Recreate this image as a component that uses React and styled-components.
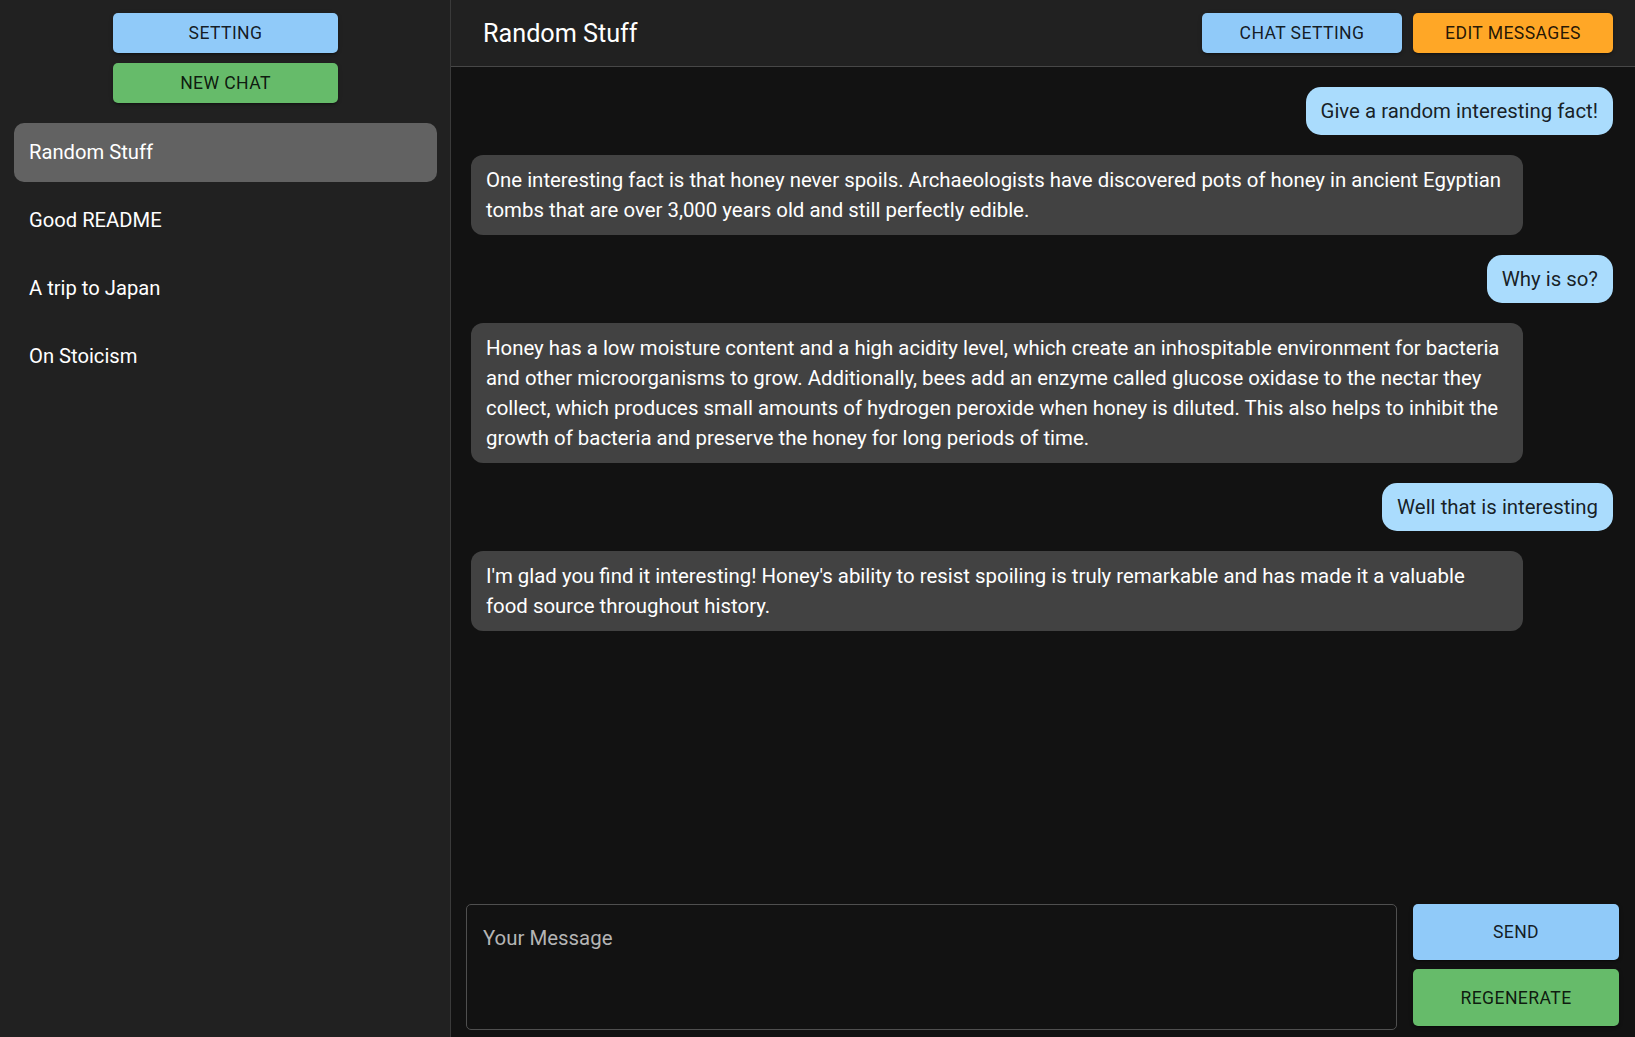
import React from 'react';
import styled, { createGlobalStyle } from 'styled-components';

const GlobalStyle = createGlobalStyle`
  html, body {
    margin: 0;
    padding: 0;
    height: 100%;
    background: #121212;
  }
  #root {
    height: 100%;
  }
  * {
    box-sizing: border-box;
  }
`;

const Layout = styled.div`
  display: flex;
  height: 100vh;
  font-family: Roboto, "Liberation Sans", sans-serif;
  color: #fff;
`;

const Sidebar = styled.aside`
  width: 451px;
  flex-shrink: 0;
  background: #212121;
  border-right: 1px solid #3a3a3a;
  display: flex;
  flex-direction: column;
  padding: 13px 13px 0 14px;
`;

const SideButtons = styled.div`
  display: flex;
  flex-direction: column;
  align-items: center;
  gap: 10px;
  margin-bottom: 20px;
`;

const Button = styled.button`
  width: ${props => props.width || 225}px;
  height: ${props => props.height || 40}px;
  border: 0;
  border-radius: 5px;
  background: ${props => props.color};
  color: rgba(0, 0, 0, 0.87);
  font-family: Roboto, "Liberation Sans", sans-serif;
  font-size: 17.6px;
  font-weight: 400;
  letter-spacing: 0.4px;
  text-transform: uppercase;
  cursor: pointer;
  box-shadow: 0 3px 1px -2px rgba(0, 0, 0, 0.2), 0 2px 2px 0 rgba(0, 0, 0, 0.14),
    0 1px 5px 0 rgba(0, 0, 0, 0.12);
`;

const ChatList = styled.ul`
  list-style: none;
  margin: 0;
  padding: 0;
  display: flex;
  flex-direction: column;
  gap: 9px;
`;

const ChatItem = styled.li`
  height: 59px;
  display: flex;
  align-items: center;
  padding: 0 15px 2px;
  border-radius: 10px;
  font-size: 20.2px;
  background: ${props => (props.active ? '#626262' : 'transparent')};
  cursor: pointer;
`;

const Main = styled.main`
  flex: 1;
  display: flex;
  flex-direction: column;
  min-width: 0;
  background: #121212;
`;

const Header = styled.header`
  height: 67px;
  flex-shrink: 0;
  background: #212121;
  border-bottom: 1px solid #474747;
  display: flex;
  align-items: center;
  padding: 0 22px 0 32px;
`;

const Title = styled.h1`
  flex: 1;
  margin: 0;
  font-size: 25.2px;
  font-weight: 400;
`;

const HeaderActions = styled.div`
  display: flex;
  gap: 11px;
`;

const Messages = styled.div`
  flex: 1;
  display: flex;
  flex-direction: column;
  gap: 20px;
  padding: 20px 22px 20px 20px;
  overflow-y: auto;
`;

const Bubble = styled.div`
  align-self: ${props => (props.user ? 'flex-end' : 'flex-start')};
  max-width: 1052px;
  width: ${props => (props.user ? 'auto' : '1052px')};
  padding: ${props => (props.user ? '9px 15px' : '10px 18px 10px 15px')};
  border-radius: ${props => (props.user ? '15px' : '12px')};
  background: ${props => (props.user ? '#aadcfd' : '#424242')};
  color: ${props => (props.user ? 'rgba(0, 0, 0, 0.87)' : '#fff')};
  font-size: 20.4px;
  line-height: 30px;
`;

const Composer = styled.div`
  display: flex;
  gap: 16px;
  padding: 0 16px 7px 15px;
`;

const MessageInput = styled.textarea`
  flex: 1;
  height: 126px;
  resize: none;
  background: transparent;
  border: 1px solid #4f4f4f;
  border-radius: 5px;
  padding: 21px 16px;
  color: #fff;
  font-family: Roboto, "Liberation Sans", sans-serif;
  font-size: 20.4px;
  outline: none;

  &::placeholder {
    color: #b5b5b5;
  }
`;

const ComposerActions = styled.div`
  display: flex;
  flex-direction: column;
  gap: 9px;
  padding-bottom: 4px;
`;

const chats = ['Random Stuff', 'Good README', 'A trip to Japan', 'On Stoicism'];

const messages = [
  { user: true, text: 'Give a random interesting fact!' },
  {
    user: false,
    text:
      'One interesting fact is that honey never spoils. Archaeologists have discovered pots of honey in ancient Egyptian tombs that are over 3,000 years old and still perfectly edible.'
  },
  { user: true, text: 'Why is so?' },
  {
    user: false,
    text:
      'Honey has a low moisture content and a high acidity level, which create an inhospitable environment for bacteria and other microorganisms to grow. Additionally, bees add an enzyme called glucose oxidase to the nectar they collect, which produces small amounts of hydrogen peroxide when honey is diluted. This also helps to inhibit the growth of bacteria and preserve the honey for long periods of time.'
  },
  { user: true, text: 'Well that is interesting' },
  {
    user: false,
    text:
      "I'm glad you find it interesting! Honey's ability to resist spoiling is truly remarkable and has made it a valuable food source throughout history."
  }
];

const App = () => {
  return (
    <>
      <GlobalStyle />
      <Layout>
        <Sidebar>
          <SideButtons>
            <Button color="#90caf9">Setting</Button>
            <Button color="#66bb6a">New Chat</Button>
          </SideButtons>
          <ChatList>
            {chats.map((name, index) => (
              <ChatItem key={name} active={index === 0}>
                {name}
              </ChatItem>
            ))}
          </ChatList>
        </Sidebar>
        <Main>
          <Header>
            <Title>Random Stuff</Title>
            <HeaderActions>
              <Button color="#90caf9" width={200}>Chat Setting</Button>
              <Button color="#ffa726" width={200}>Edit Messages</Button>
            </HeaderActions>
          </Header>
          <Messages>
            {messages.map((message, index) => (
              <Bubble key={index} user={message.user}>
                {message.text}
              </Bubble>
            ))}
          </Messages>
          <Composer>
            <MessageInput placeholder="Your Message" />
            <ComposerActions>
              <Button color="#90caf9" width={206} height={56}>Send</Button>
              <Button color="#66bb6a" width={206} height={57}>Regenerate</Button>
            </ComposerActions>
          </Composer>
        </Main>
      </Layout>
    </>
  );
};

export default App;
